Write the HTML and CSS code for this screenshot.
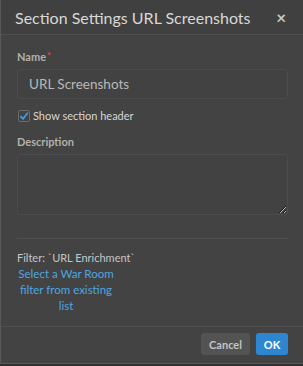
FILE: index.html
```html
<!DOCTYPE html>
<html lang="en">
  <head>
    <meta charset="UTF-8" />
    <title>Section Settings</title>
    <link rel="stylesheet" href="styles.css">
  </head>
  <body>
    <div class="dialog">
      <div class="dialog-header">
        <h1>Section Settings URL Screenshots</h1>
        <span class="close">&times;</span>
      </div>

      <div class="dialog-body">
        <label class="field-label">Name<span class="required">*</span></label>
        <input class="text-input" type="text" value="URL Screenshots" />

        <label class="check-row">
          <span class="checkbox">
            <svg width="10" height="10" viewBox="0 0 10 10">
              <path d="M1.5 5.2 L4 7.8 L8.8 1.8" fill="none" stroke="#3d9be9" stroke-width="1.8" />
            </svg>
          </span>
          Show section header
        </label>

        <label class="field-label">Description</label>
        <textarea class="text-area"></textarea>

        <div class="divider"></div>

        <div class="filter">Filter: `URL Enrichment`</div>
        <a class="filter-link">Select a War Room filter from existing list</a>
      </div>

      <div class="dialog-footer">
        <button class="btn btn-cancel">Cancel</button>
        <button class="btn btn-ok">OK</button>
      </div>
    </div>
  </body>
</html>
```

FILE: styles.css
```css
:root {
  --bg-color: #424342;
  --border-color: #4f504f;
  --label-color: #b3b0aa;
  --text-color: #dcdcdc;
  --link-color: #4ea6e3;
}

body {
  margin: 0;
  background-color: #2f302f;
  font-family: 'Lato', 'Noto Sans', sans-serif;
  color: var(--text-color);
}

.dialog {
  width: 302px;
  height: 363px;
  background-color: var(--bg-color);
  border-left: 1px solid #575857;
  border-bottom: 1px solid #575857;
  display: flex;
  flex-direction: column;
}

.dialog-header {
  height: 34px;
  border-bottom: 1px solid var(--border-color);
  display: flex;
  align-items: center;
  justify-content: space-between;
  padding: 0 17px 0 14px;
  background-color: #3f403f;
}

.dialog-header h1 {
  margin: 0;
  font-size: 16px;
  font-weight: normal;
  color: #d8d8d8;
}

.close {
  font-size: 17px;
  font-weight: bold;
  color: #c8c8c8;
}

.dialog-body {
  flex: 1;
  padding: 15px 15px 0 16px;
  display: flex;
  flex-direction: column;
}

.field-label {
  font-size: 11px;
  font-weight: bold;
  color: var(--label-color);
  margin-bottom: 6px;
}

.required {
  color: #e0454a;
  font-size: 9px;
  vertical-align: top;
  margin-left: 1px;
}

.text-input {
  height: 30px;
  box-sizing: border-box;
  background-color: #414241;
  border: 1px solid #4b4c4b;
  border-radius: 3px;
  padding: 0 11px;
  font-family: inherit;
  font-size: 13.5px;
  color: #b9b9b9;
  outline: none;
}

.check-row {
  display: flex;
  align-items: center;
  gap: 3px;
  margin: 10px 0 13px 1px;
  font-size: 11px;
  color: #d6d6d6;
}

.checkbox {
  width: 10px;
  height: 10px;
  border: 1px solid #6a6b6a;
  border-radius: 2px;
  display: flex;
  align-items: center;
  justify-content: center;
}

.text-area {
  height: 61px;
  box-sizing: border-box;
  background-color: #414241;
  border: 1px solid #4b4c4b;
  border-radius: 3px;
  resize: vertical;
  outline: none;
}

.divider {
  height: 1px;
  background-color: var(--border-color);
  margin: 23px 0 12px;
}

.filter {
  font-size: 11px;
  color: #c6c6c6;
}

.filter-link {
  width: 98px;
  margin-top: 2px;
  text-align: center;
  font-size: 11.5px;
  line-height: 16px;
  color: var(--link-color);
}

.dialog-footer {
  height: 37px;
  box-sizing: border-box;
  border-top: 1px solid var(--border-color);
  display: flex;
  justify-content: flex-end;
  align-items: flex-start;
  gap: 6px;
  padding: 6px 15px 0;
}

.btn {
  height: 22px;
  border: none;
  border-radius: 3px;
  font-family: inherit;
  font-size: 11px;
  font-weight: bold;
  padding: 0;
}

.btn-cancel {
  background-color: #525352;
  color: #c4c4c4;
  width: 49px;
}

.btn-ok {
  background-color: #2e86d1;
  color: #ffffff;
  width: 32px;
}
```
